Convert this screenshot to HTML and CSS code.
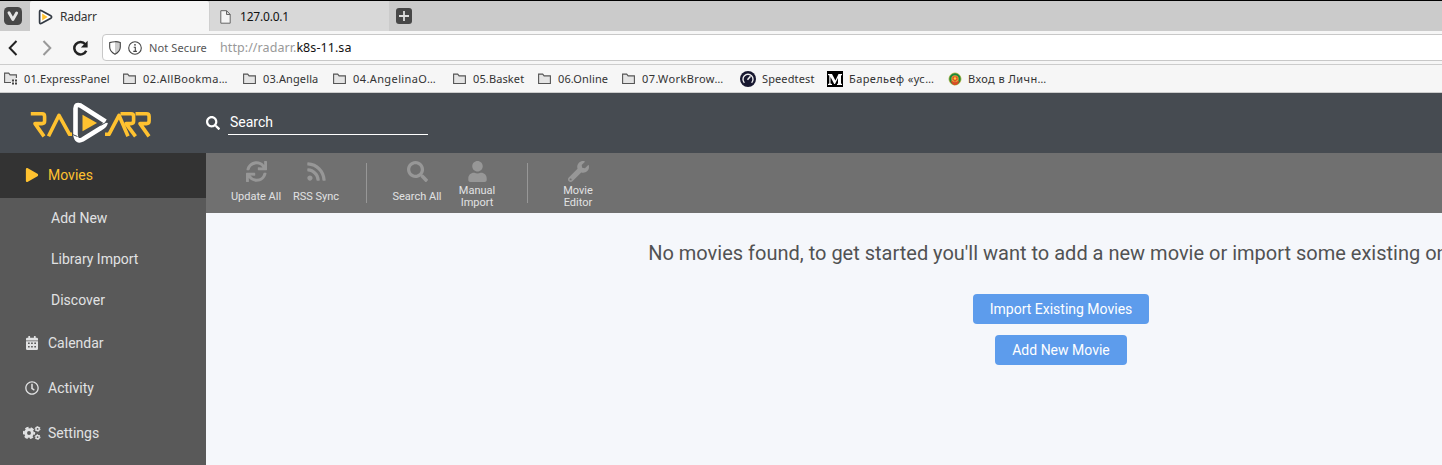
FILE: index.html
```html
<!DOCTYPE html>
<html lang="en">
<head>
<meta charset="utf-8">
<title>Radarr</title>
<link rel="stylesheet" href="styles.css">
</head>
<body>
<svg class="defs" width="0" height="0">
  <symbol id="folder" viewBox="0 0 14 12"><path d="M.6 1.1h4.1l1.4 1.8h6.3v7.6H.6z" fill="#e4e4e4" stroke="#555" stroke-width="1.1"/></symbol>
  <symbol id="search" viewBox="0 0 512 512"><path d="M505 442.7L405.3 343c-4.5-4.5-10.6-7-17-7H372c27.6-35.3 44-79.7 44-128C416 93.1 322.9 0 208 0S0 93.1 0 208s93.1 208 208 208c48.3 0 92.7-16.4 128-44v16.3c0 6.4 2.5 12.5 7 17l99.7 99.7c9.4 9.4 24.6 9.4 33.9 0l28.3-28.3c9.4-9.4 9.4-24.6.1-34zM208 336c-70.7 0-128-57.2-128-128 0-70.7 57.2-128 128-128 70.7 0 128 57.2 128 128 0 70.7-57.2 128-128 128z"/></symbol>
</svg>

<div class="tabs">
  <div class="menu"><svg width="18" height="18" viewBox="0 0 18 18"><rect width="18" height="18" rx="4.5" fill="#474747"/><path d="M5 5.8l3.9 6.6L12.6 6" fill="none" stroke="#e4e4e4" stroke-width="2.9" stroke-linecap="round" stroke-linejoin="round"/></svg></div>
  <div class="tab active"><svg width="15" height="16" viewBox="0 0 15 16"><path d="M1.6 2.8Q1.6.6 3.6 1.7L12.8 6.8Q14.4 8 12.8 9.2L3.6 14.3Q1.6 15.4 1.6 13.2z" fill="#fff" stroke="#333a43" stroke-width="1.7"/><path d="M4.2 4.6L9.6 8l-5.4 3.4z" fill="#ffc230"/></svg><span class="t-radarr">Radarr</span></div>
  <div class="tab"><svg width="11" height="14" viewBox="0 0 11 14"><path d="M.8.7h5.8l3.6 3.6v8.9H.8zM6.5.7v3.8h3.7" fill="#f4f4f4" stroke="#666"/></svg><span class="t-host">127.0.0.1</span></div>
  <div class="plus"><svg width="16" height="16" viewBox="0 0 16 16"><rect width="16" height="16" rx="3" fill="#474747"/><path d="M3 8h10M8 3v10" stroke="#ddd" stroke-width="1.8"/></svg></div>
</div>

<div class="address">
  <svg class="back" width="10" height="16" viewBox="0 0 10 16"><path d="M8.5 1L1.7 8l6.8 7" fill="none" stroke="#222" stroke-width="2"/></svg>
  <svg class="forward" width="10" height="16" viewBox="0 0 10 16"><path d="M1.5 1l6.8 7-6.8 7" fill="none" stroke="#999" stroke-width="2"/></svg>
  <svg class="reload" width="17" height="16" viewBox="0 0 17 16"><path d="M13.3 4.2A6.2 6.2 0 1 0 14.2 10.7" fill="none" stroke="#222" stroke-width="2.5"/><path d="M15.6.7v6.8H8.9z" fill="#222"/></svg>
  <div class="field">
    <svg width="12" height="14" viewBox="0 0 12 14"><path d="M.7 1.6Q3.5.9 6 .7v12.5C2 11.2.7 8.5.7 6z" fill="#fff"/><path d="M6 .7q2.5.2 5.3.9V6c0 2.5-1.3 5.2-5.3 7.2z" fill="#ccc"/><path d="M.7 1.6Q3.5.9 6 .7t5.3.9V6c0 2.5-1.3 5.2-5.3 7.2C2 11.2.7 8.5.7 6z" fill="none" stroke="#444" stroke-width="1.1"/></svg>
    <svg class="info" width="14" height="14" viewBox="0 0 14 14"><circle cx="7" cy="7" r="6.3" fill="none" stroke="#444" stroke-width="1.1"/><path d="M5.7 6.3h1.6v4M5.3 10.4h3.6" fill="none" stroke="#444" stroke-width="1.1"/><circle cx="7" cy="3.8" r=".9" fill="#444"/></svg>
    <span class="security">Not Secure</span>
    <span class="url">http://radarr.<b>k8s-11.sa</b></span>
  </div>
</div>

<div class="bookmarks">
  <div><svg width="14" height="13" viewBox="0 0 14 13"><path d="M7 10.5H.6V1.1h4.1l1.4 1.8h6.3V6" fill="#e4e4e4" stroke="#555" stroke-width="1.1"/><path d="M8 7.5h2v2H8zm3 0h2v2h-2zM8 10.5h2v2H8zm3 0h2v2h-2z" fill="#444"/></svg><span>01.ExpressPanel</span></div>
  <div><svg width="14" height="12"><use href="#folder"/></svg><span class="cut">02.AllBookma…</span></div>
  <div><svg width="14" height="12"><use href="#folder"/></svg><span>03.Angella</span></div>
  <div><svg width="14" height="12"><use href="#folder"/></svg><span class="cut">04.AngelinaO…</span></div>
  <div><svg width="14" height="12"><use href="#folder"/></svg><span>05.Basket</span></div>
  <div><svg width="14" height="12"><use href="#folder"/></svg><span>06.Online</span></div>
  <div><svg width="14" height="12"><use href="#folder"/></svg><span class="cut">07.WorkBrow…</span></div>
  <div><svg width="16" height="16" viewBox="0 0 16 16"><circle cx="8" cy="8" r="8" fill="#17172f"/><path d="M4.4 11.7a5 5 0 1 1 7.2 0" fill="none" stroke="#eee" stroke-width="1.4"/><path d="M7.5 8.8l3-3.5" stroke="#eee" stroke-width="1.5"/></svg><span>Speedtest</span></div>
  <div><svg width="16" height="16" viewBox="0 0 16 16"><path d="M0 0h16v16H0z" fill="#000"/><path d="M1 3h4l3.4 6.5L11.5 3H15v1l-1 .5v8l1 .5v1h-5v-1l1-.5V7L8 13h-.8L3.5 6v6.5L5 13v1H1v-1l1.300-.5v-8L1 4z" fill="#fff"/></svg><span class="cut">Барельеф «ус…</span></div>
  <div><svg width="14" height="14" viewBox="0 0 14 14"><circle cx="7" cy="7" r="6" fill="#e0a33b" stroke="#b3bd55"/><circle cx="7" cy="7" r="4.700" fill="none" stroke="#168a3c" stroke-width="2"/><path d="M2.500 8.500Q5 14 7 13q3 0 4.500-4.500l-4.500 2z" fill="#dc4a24"/><path d="M4.500 4.500h5v3L7 10 4.500 7.500z" fill="#e34d22"/><circle cx="7" cy="6.500" r="1.300" fill="#ffd13a"/></svg><span class="cut">Вход в Личн…</span></div>
</div>

<header class="header">
  <svg class="logo" width="122" height="42" viewBox="0 0 122 42">
    <g fill="none" stroke="#ffc230" stroke-width="3.600" stroke-linejoin="round">
      <path d="M.8 11.800H12q2.600 0 2.600 2.600v4.600q0 2.600-2.600 2.600H5l9 12.800"/>
      <path d="M18.500 34.300L29 13.300l10.500 19H45"/>
      <path d="M75 32.300h4l10-19 9 21"/>
      <path d="M90.500 11.800H101q2.600 0 2.600 2.600v4.600q0 2.600-2.600 2.600h-5l9.500 12.800"/>
      <path d="M105.500 11.800h11q2.600 0 2.600 2.600v4.600q0 2.600-2.600 2.600h-6.500l9 12.800"/>
    </g>
    <path d="M45 5Q45 1.500 49 3.200L74 18q4 3 0 6L52 37.500Q45 41 45 36z" fill="#464b51" stroke="#464b51" stroke-width="6"/>
    <path d="M45.500 34V6.500q0-5 5-3L75.500 19.500" fill="none" stroke="#fff" stroke-width="4.600"/>
    <path d="M45.500 33q1 7.500 7 4.500L71 26q4-2.300 4.600-5.500" fill="none" stroke="#fff" stroke-width="4.600"/>
    <path d="M42.500 32.500l5 2M70.500 23.500l7-4" stroke="#464b51" stroke-width="1"/>
    <path d="M52.500 12.700L67 21l-14.500 8.300z" fill="#ffc230"/>
  </svg>
  <svg class="find" width="14" height="14"><use href="#search"/></svg>
  <div class="search">Search</div>
</header>

<div class="body">
  <nav class="sidebar">
    <div class="item selected"><svg width="14" height="14" viewBox="-32 0 512 512"><path d="M424.400 214.700L72.400 6.600C43.800-10.300 0 6.100 0 47.900V464c0 37.500 40.700 60.100 72.400 41.300l352-208c31.400-18.500 31.500-64.100 0-82.600z"/></svg><span>Movies</span></div>
    <div class="sub">Add New</div>
    <div class="sub">Library Import</div>
    <div class="sub">Discover</div>
    <div class="item"><svg width="12" height="14" viewBox="0 0 12 14"><path fill-rule="evenodd" d="M0 5.200h12v7.500q0 1.300-1.300 1.300H1.300Q0 14 0 12.700zM2 6.500v1.600h1.700V6.500zm3.100 0v1.600h1.700V6.500zm3.200 0v1.600H10V6.500zM2 10v1.600h1.700V10zm3.100 0v1.600h1.700V10zm3.200 0v1.600H10V10z"/><path d="M0 4.400V3q0-1.200 1.300-1.200h1V.3q0-.3.400-.3h1q.4 0 .4.300v1.500h3.800V.3q0-.3.400-.3h1q.4 0 .4.300v1.500h1Q12 1.800 12 3v1.400z"/></svg><span>Calendar</span></div>
    <div class="item"><svg width="14" height="14" viewBox="0 0 512 512"><path d="M256 8C119 8 8 119 8 256s111 248 248 248 248-111 248-248S393 8 256 8zm0 448c-110.500 0-200-89.500-200-200S145.500 56 256 56s200 89.500 200 200-89.500 200-200 200zm61.800-104.400l-84.900-61.700c-3.100-2.300-4.900-5.900-4.900-9.700V116c0-6.600 5.400-12 12-12h32c6.600 0 12 5.400 12 12v141.700l66.800 48.600c5.400 3.900 6.500 11.400 2.600 16.800L334.600 349c-3.900 5.300-11.400 6.500-16.800 2.600z"/></svg><span>Activity</span></div>
    <div class="item"><svg width="18" height="14" viewBox="0 0 18 14"><g fill="none" stroke="#e1e2e3"><circle cx="6" cy="7" r="3.400" stroke-width="2.900"/><circle cx="6" cy="7" r="5.200" stroke-width="1.900" stroke-dasharray="3.300 2.145" stroke-dashoffset="1.650"/><circle cx="14.600" cy="2.900" r="1.700" stroke-width="1.500"/><circle cx="14.600" cy="2.900" r="2.500" stroke-width=".9" stroke-dasharray="1.310"/><circle cx="14.600" cy="11.100" r="1.700" stroke-width="1.500"/><circle cx="14.600" cy="11.100" r="2.500" stroke-width=".9" stroke-dasharray="1.310"/></g></svg><span>Settings</span></div>
  </nav>
  <main class="page">
    <div class="toolbar">
      <div class="tool"><svg width="21" height="21" viewBox="0 0 512 512"><path d="M440.650 12.570l4 82.770A247.160 247.160 0 0 0 255.830 8C134.730 8 33.910 94.920 12.290 209.820A12 12 0 0 0 24.090 224h49.050a12 12 0 0 0 11.670-9.260 175.910 175.910 0 0 1 317-56.940l-101.460-4.860a12 12 0 0 0-12.570 12v47.410a12 12 0 0 0 12 12H500a12 12 0 0 0 12-12V12a12 12 0 0 0-12-12h-47.370a12 12 0 0 0-11.980 12.570zM255.830 432a175.610 175.610 0 0 1-146-77.800l101.800 4.870a12 12 0 0 0 12.570-12v-47.400a12 12 0 0 0-12-12H12a12 12 0 0 0-12 12V500a12 12 0 0 0 12 12h47.350a12 12 0 0 0 12-12.600l-4.150-82.570A247.170 247.170 0 0 0 255.830 504c121.110 0 221.930-86.920 243.550-201.820a12 12 0 0 0-11.800-14.180h-49.050a12 12 0 0 0-11.670 9.260A175.860 175.860 0 0 1 255.830 432z"/></svg><span>Update All</span></div>
      <div class="tool"><svg width="21" height="21" viewBox="-32 0 512 512"><path d="M128.081 415.959c0 35.369-28.672 64.041-64.041 64.041S0 451.328 0 415.959s28.672-64.041 64.041-64.041 64.040 28.673 64.040 64.041zm175.660 47.250c-8.354-154.600-132.185-278.587-286.950-286.950C7.656 175.765 0 183.105 0 192.253v48.069c0 8.415 6.490 15.472 14.887 16.018 111.832 7.284 201.473 96.702 208.772 208.772.547 8.397 7.604 14.887 16.018 14.887h48.069c9.149.001 16.489-7.655 15.995-16.790zm144.249.288C439.596 229.677 251.465 40.445 16.503 32.010 7.473 31.686 0 38.981 0 48.016v48.068c0 8.625 6.835 15.645 15.453 15.999 191.179 7.839 344.627 161.316 352.465 352.465.353 8.618 7.373 15.453 15.999 15.453h48.068c9.034-.001 16.329-7.474 16.005-16.504z"/></svg><span>RSS Sync</span></div>
      <div class="divider"></div>
      <div class="tool"><svg width="21" height="21"><use href="#search"/></svg><span>Search All</span></div>
      <div class="tool"><svg width="21" height="21" viewBox="-32 0 512 512"><path d="M224 256c70.700 0 128-57.300 128-128S294.700 0 224 0 96 57.300 96 128s57.300 128 128 128zm89.600 32h-16.700c-22.200 10.200-46.900 16-72.900 16s-50.600-5.800-72.900-16h-16.700C60.200 288 0 348.200 0 422.400V464c0 26.500 21.500 48 48 48h352c26.500 0 48-21.500 48-48v-41.600c0-74.200-60.200-134.400-134.400-134.400z"/></svg><span>Manual<br>Import</span></div>
      <div class="divider"></div>
      <div class="tool"><svg width="21" height="21" viewBox="0 0 512 512"><path d="M507.730 109.100c-2.240-9.030-13.540-12.090-20.120-5.510l-74.360 74.360-67.880-11.310-11.310-67.880 74.360-74.360c6.620-6.620 3.430-17.900-5.660-20.160-47.380-11.740-99.550.91-136.580 37.930-39.640 39.640-50.550 97.100-34.050 147.200L18.740 402.760c-24.990 24.990-24.990 65.510 0 90.500 24.990 24.990 65.510 24.990 90.500 0l213.210-213.210c50.120 16.710 107.470 5.680 147.370-34.220 37.070-37.070 49.700-89.320 37.910-136.730zM64 472c-13.250 0-24-10.750-24-24 0-13.260 10.750-24 24-24s24 10.740 24 24c0 13.250-10.750 24-24 24z"/></svg><span>Movie<br>Editor</span></div>
    </div>
    <div class="empty">
      <div class="message">No movies found, to get started you'll want to add a new movie or import some existing ones.</div>
      <div class="button">Import Existing Movies</div>
      <div class="button">Add New Movie</div>
    </div>
  </main>
</div>
</body>
</html>
```
FILE: styles.css
```css
* { box-sizing: border-box; }
html, body { height: 100%; }
body { margin: 0; display: flex; flex-direction: column; overflow: hidden; background: #f5f7fb; font: 14px/20px Roboto, sans-serif; color: #515253; }
svg { display: block; flex: none; }
.defs { position: absolute; }

.tabs, .address, .bookmarks { flex: none; font-family: "Noto Sans", sans-serif; color: #333; white-space: nowrap; }
.tabs { display: flex; height: 31px; border-top: 1px solid #000; background: #cbcbcb; font-size: 12px; }
.menu { width: 30px; padding: 6px 4px; }
.tab { display: flex; align-items: center; width: 180px; padding: 1px 10px 0; background: #d8d8d8; color: #111; }
.tab.active { width: 179px; padding-left: 8px; background: #f6f6f6; color: #333; border-radius: 2px 2px 0 0; }
.tab.active span { margin-left: 7px; letter-spacing: -.25px; }
.tab span { margin-left: 9px; letter-spacing: -.2px; }
.tab + .tab { border-left: 1px solid #cfcfcf; }
.plus { padding: 7px; }

.address { display: flex; align-items: center; height: 34px; padding-left: 8px; border-bottom: 1px solid #ccc; background: #f6f6f6; }
.forward { margin-left: 24px; }
.reload { margin-left: 20px; }
.field { display: flex; align-items: center; flex: 1; height: 27px; margin: 0 -4px 0 13px; padding-left: 6px; border: 1px solid #c8c8c8; border-radius: 4px; background: #fff; }
.info { margin-left: 7px; }
.security { width: 71px; margin-left: 7px; color: #555; font-size: 11px; letter-spacing: .12px; }
.url { color: #999; font-size: 12.5px; letter-spacing: .07px; }
.url b { color: #111; font-weight: 400; }

.bookmarks { display: grid; grid-template-columns: 119px 120px 90px 120px 85px 84px 118px 87px 121px 110px; height: 28px; padding-left: 4px; border-bottom: 1px solid #ccc; background: #f6f6f6; font-size: 11px; }
.bookmarks div { display: flex; align-items: center; gap: 6px; }
.bookmarks span { letter-spacing: .12px; }
.bookmarks .cut { letter-spacing: .4px; }

.header { display: flex; flex: none; height: 60px; background: #464b51; color: #fff; }
.logo { margin: 9px 0 0 30px; }
.find { margin: 23px 8px 0 54px; fill: #fff; }
.search { width: 200px; height: 25px; margin-top: 17px; padding: 2px; border-bottom: 1px solid #fff; }

.body { display: flex; flex: 1; min-height: 0; }
.sidebar { flex: none; width: 206px; background: #595959; color: #e1e2e3; fill: #e1e2e3; }
.item { display: flex; align-items: center; height: 45px; padding: 0 0 1px 23px; }
.item svg { width: 18px; }
.item span { margin-left: 7px; }
.item.selected { background: #333; color: #ffc230; fill: #ffc230; }
.sub { height: 41px; padding: 10px 0 0 51px; }
.page { flex: none; width: 1710px; }
.toolbar { display: flex; height: 60px; padding-left: 20px; background: #707070; color: #e1e2e3; font-size: 11px; line-height: 12px; text-align: center; }
.tool { display: flex; flex-direction: column; align-items: center; width: 60px; padding-top: 8px; fill: #979797; }
.tool span { display: flex; align-items: center; height: 24px; margin-top: 3px; }
.divider { width: 1px; height: 40px; margin: 10px 20px; background: #979797; }
.empty { display: flex; flex-direction: column; align-items: center; padding-top: 25px; }
.message { margin-bottom: 26px; font-size: 20px; line-height: 30px; }
.button { height: 30px; margin-bottom: 11px; padding: 5px 17px; border-radius: 4px; background: #5d9cec; color: #fff; }
```
